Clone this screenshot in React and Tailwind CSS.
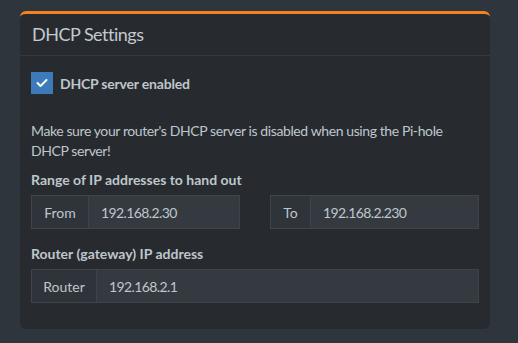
import React from "react";

function Addon({ label, value, addonW }) {
  return (
    <div className="flex h-[34px] border border-[#3f444b] bg-[#353a41]">
      <div className={`flex items-center justify-center bg-[#2f343a] border-r border-[#3f444b] ${addonW}`}>{label}</div>
      <div className="flex items-center pl-[12px] tracking-[-0.6px]">{value}</div>
    </div>
  );
}

export default function App() {
  return (
    <div className="w-[518px] h-[343px] bg-[#2f353d] pt-[11px] pl-[20px] text-[#bfc6cc] text-[14px]" style={{ fontFamily: "Lato, 'Open Sans', sans-serif" }}>
      <div className="w-[470px] h-[318px] bg-[#272b30] rounded-[6px] border-t-[3px] border-[#f5821f]">
        <div className="h-[42px] flex items-center pl-[12px] border-b border-[#34393e] text-[18px] font-normal tracking-[-0.5px] text-[#c2c9cf]">
          DHCP Settings
        </div>
        <div className="px-[11px] pt-[16px]">
          <div className="flex items-center gap-[7px] h-[22px]">
            <div className="w-[22px] h-[22px] bg-[#3c7ab9] flex items-center justify-center">
              <svg width="12" height="10" viewBox="0 0 12 10" fill="none">
                <path d="M1.5 5 L4.5 8 L10.5 2" stroke="#ffffff" strokeWidth="2" strokeLinecap="round" strokeLinejoin="round" />
              </svg>
            </div>
            <span className="font-bold tracking-[-0.2px]">DHCP server enabled</span>
          </div>
          <p className="mt-[27px] leading-[20px] tracking-[-0.4px]">
            Make sure your router's DHCP server is disabled when using the Pi-hole DHCP server!
          </p>
          <div className="mt-[9px] leading-[20px] font-bold">Range of IP addresses to hand out</div>
          <div className="mt-[5px] grid grid-cols-2 gap-[30px]">
            <Addon label="From" value="192.168.2.30" addonW="w-[57px]" />
            <Addon label="To" value="192.168.2.230" addonW="w-[40px]" />
          </div>
          <div className="mt-[15px] leading-[20px] font-bold">Router (gateway) IP address</div>
          <div className="mt-[5px]">
            <Addon label="Router" value="192.168.2.1" addonW="w-[65px]" />
          </div>
        </div>
      </div>
    </div>
  );
}
